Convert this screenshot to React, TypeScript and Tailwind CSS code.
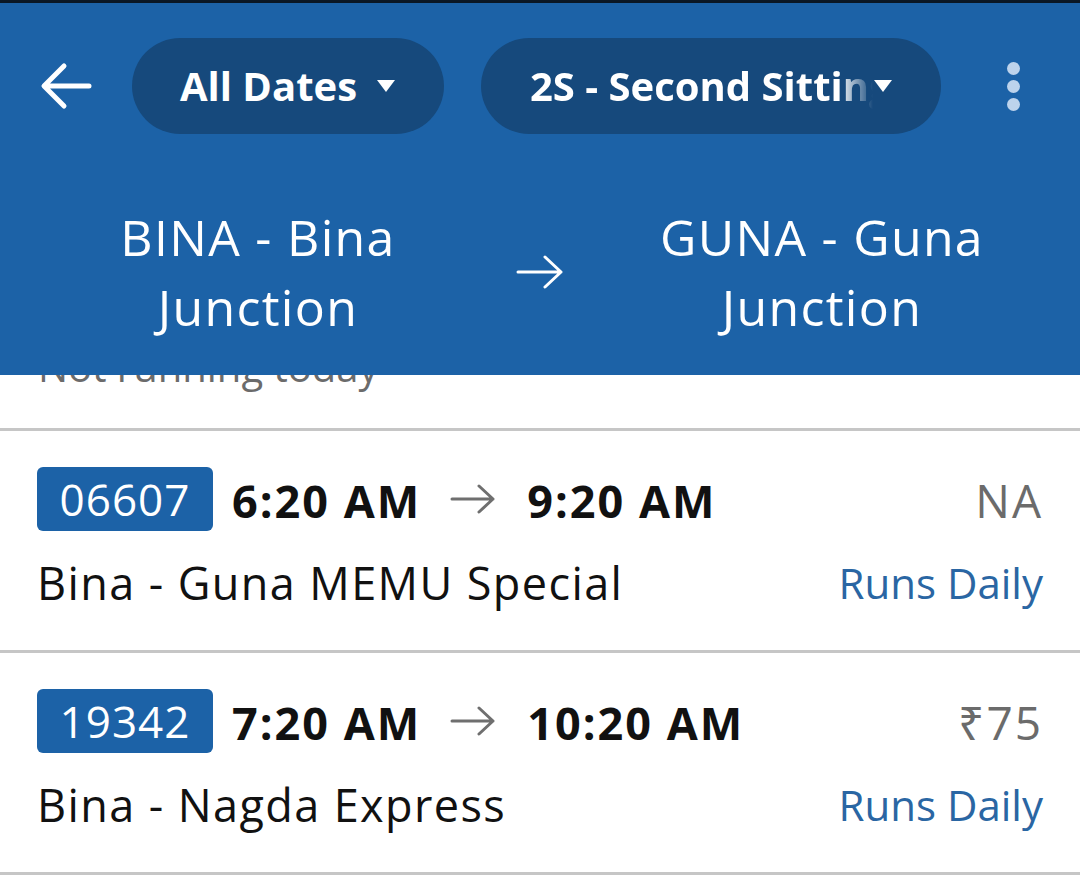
import React from 'react';

const font = { fontFamily: '"Open Sans", "Noto Sans", sans-serif' };

const trains = [
  { no: '06607', dep: '6:20 AM', arr: '9:20 AM', fare: 'NA', name: 'Bina - Guna MEMU Special' },
  { no: '19342', dep: '7:20 AM', arr: '10:20 AM', fare: '₹75', name: 'Bina - Nagda Express' },
];

const Caret = () => (
  <svg width="20" height="14" viewBox="0 0 20 14" className="shrink-0">
    <path d="M1 1 H19 L10 13 Z" fill="#ffffff" />
  </svg>
);

export default function App() {
  return (
    <div className="w-[1080px] h-[875px] overflow-hidden bg-white flex flex-col" style={font}>
      {/* status strip */}
      <div className="h-[3px] bg-[#0b1826]" />

      {/* toolbar */}
      <div className="h-[167px] bg-[#1c62a7] flex items-center pl-[40px] pr-[60px] relative z-10 shadow-[0_4px_6px_rgba(0,0,0,0.18)]">
        <svg width="52" height="48" viewBox="0 0 52 48" className="shrink-0">
          <path d="M49 24 H5 M24 4 L4 24 L24 44" stroke="#ffffff" strokeWidth="5" fill="none" strokeLinecap="round" strokeLinejoin="round" />
        </svg>
        <div className="ml-[40px] w-[312px] h-[96px] rounded-full bg-[#16497c] flex items-center justify-center gap-[19px]">
          <span className="text-white text-[40px] font-bold">All Dates</span>
          <Caret />
        </div>
        <div className="ml-[37px] w-[460px] h-[96px] rounded-full bg-[#16497c] flex items-center pl-[49px] pr-[48px]">
          <span
            className="text-white text-[40px] font-bold whitespace-nowrap overflow-hidden w-[343px]"
            style={{ WebkitMaskImage: 'linear-gradient(to right, #000 90%, transparent 100%)' }}
          >
            2S - Second Sitting
          </span>
          <Caret />
        </div>
        <div className="ml-auto flex flex-col gap-[5px] items-center">
          <div className="w-[13px] h-[13px] rounded-full bg-[#bdd3ec]" />
          <div className="w-[13px] h-[13px] rounded-full bg-[#bdd3ec]" />
          <div className="w-[13px] h-[13px] rounded-full bg-[#bdd3ec]" />
        </div>
      </div>

      {/* route */}
      <div className="h-[207px] bg-[#1c62a7] flex items-center text-white relative z-10">
        <div className="flex-1 text-center text-[50px] leading-[70px] tracking-[1.3px] pl-[20px]">
          BINA - Bina
          <br />
          Junction
        </div>
        <svg width="48" height="34" viewBox="0 0 48 34" className="shrink-0 mx-[20px]">
          <path d="M2 17 H45 M29 2 L45 17 L29 32" stroke="#ffffff" strokeWidth="3" fill="none" strokeLinecap="round" strokeLinejoin="round" />
        </svg>
        <div className="flex-1 text-center text-[50px] leading-[70px] tracking-[1.3px] pr-[20px]">
          GUNA - Guna
          <br />
          Junction
        </div>
      </div>

      {/* list */}
      <div className="flex flex-col">
        <div className="h-[56px] overflow-hidden border-b-[3px] border-[#c6c6c6]">
          <div className="-mt-[38px] pl-[38px] text-[40px] text-[#6b6b6b]">Not running today</div>
        </div>

        {trains.map((t) => (
          <div key={t.no} className="h-[222px] border-b-[3px] border-[#c6c6c6] px-[37px] pt-[36px] flex flex-col">
            <div className="flex items-center h-[64px]">
              <div className="w-[176px] h-[64px] rounded-[6px] bg-[#1c62a7] text-white text-[44px] tracking-[1px] flex items-center justify-center">
                {t.no}
              </div>
              <span className="ml-[19px] text-[45px] font-bold tracking-[2px] text-[#111111] mt-[3px]">{t.dep}</span>
              <svg width="46" height="30" viewBox="0 0 46 30" className="ml-[29px] mr-[31px] shrink-0">
                <path d="M2 15 H43 M29 2 L43 15 L29 28" stroke="#6f6f6f" strokeWidth="3" fill="none" strokeLinecap="round" strokeLinejoin="round" />
              </svg>
              <span className="text-[45px] font-bold tracking-[2px] text-[#111111] mt-[3px]">{t.arr}</span>
              <span className="ml-auto text-[46px] tracking-[2px] text-[#6b6b6b] mt-[3px]">{t.fare}</span>
            </div>
            <div className="flex items-center justify-between mt-[18px]">
              <span className="text-[45px] tracking-[1.4px] text-[#111111]">{t.name}</span>
              <span className="text-[42px] text-[#2a66a3]">Runs Daily</span>
            </div>
          </div>
        ))}
      </div>
    </div>
  );
}
